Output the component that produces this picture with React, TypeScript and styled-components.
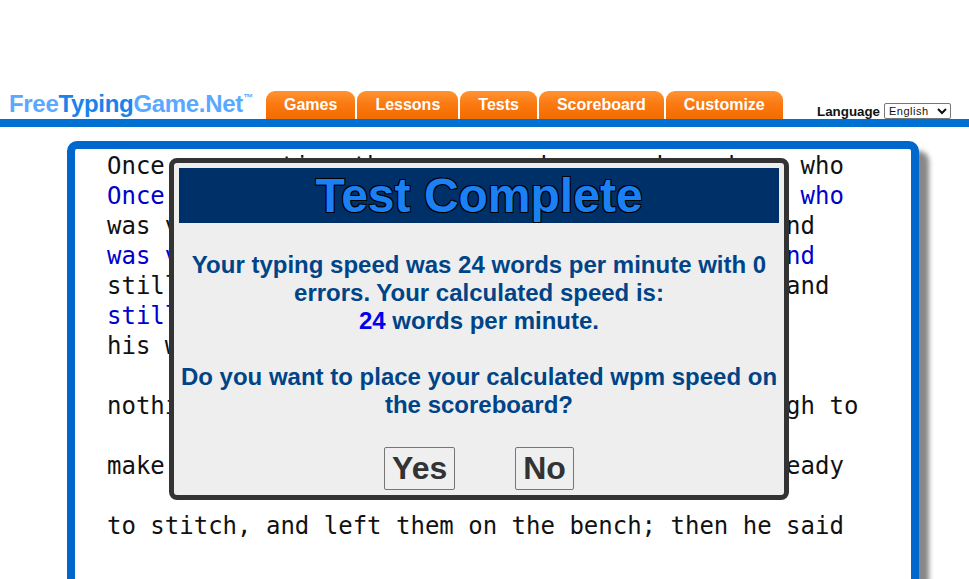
import React from "react";
import styled, { createGlobalStyle } from "styled-components";

const Global = createGlobalStyle`
  html, body { margin: 0; padding: 0; background: #fff; height: 100%; overflow: hidden; }
  body { font-family: "Liberation Sans", Arial, sans-serif; }
`;

const Page = styled.div`
  position: relative;
  width: 969px;
  height: 579px;
  overflow: hidden;
  padding-top: 91px;
  box-sizing: border-box;
`;

const Header = styled.header`
  display: flex;
  align-items: flex-end;
  height: 28px;
  padding-left: 9px;
  padding-right: 18px;
`;

const Logo = styled.div`
  width: 257px;
  align-self: flex-start;
  margin-top: -2px;
  font-size: 24px;
  line-height: 29px;
  font-weight: 700;
  letter-spacing: -0.32px;
  color: #5aa8ff;
  white-space: nowrap;
`;

const LogoAccent = styled.span`
  color: #1b82ea;
`;

const Tm = styled.sup`
  font-size: 10px;
  line-height: 0;
  vertical-align: 11px;
  letter-spacing: -0.5px;
`;

const Tabs = styled.nav`
  display: flex;
  gap: 2px;
  height: 28px;
`;

const Tab = styled.a`
  display: block;
  box-sizing: border-box;
  height: 28px;
  padding: 4px 18px 0;
  border-radius: 9px 9px 0 0;
  background: linear-gradient(#ff9433, #fb7a12 45%, #f26c00);
  color: #fff;
  font-size: 16px;
  line-height: 19px;
  font-weight: 700;
`;

const Language = styled.div`
  margin-left: auto;
  display: flex;
  align-items: flex-end;
  gap: 4px;
  font-size: 13.33px;
  font-weight: 700;
  color: #111;
`;

const LanguageLabel = styled.span`
  line-height: 15px;
`;

const LanguageSelect = styled.select`
  width: 67px;
  height: 16px;
  padding: 0;
  font-family: "Liberation Sans", Arial, sans-serif;
  font-size: 11px;
  letter-spacing: 0.5px;
  background: #fff;
  color: #111;
  border: 1px solid #767676;
  border-radius: 2px;
`;

const Bar = styled.div`
  height: 8px;
  background: #0070d2;
`;

const Panel = styled.main`
  box-sizing: border-box;
  width: 852px;
  height: 600px;
  margin: 14px 0 0 67px;
  border: 8px solid #0067cc;
  border-radius: 10px;
  padding: 2px 32px;
  background: #fff;
  box-shadow: 10px 10px 5px #888;
`;

const Line = styled.div<{ $typed?: boolean }>`
  height: 30px;
  font-family: "DejaVu Sans Mono", monospace;
  font-size: 24px;
  line-height: 30px;
  white-space: pre;
  color: ${(p) => (p.$typed ? "#0000cc" : "#111")};
`;

const Modal = styled.div`
  position: absolute;
  left: 169px;
  top: 158px;
  box-sizing: border-box;
  width: 620px;
  height: 342px;
  border: 5px solid #333;
  border-radius: 8px;
  background: #eee;
  padding: 5px 5px 0;
  text-align: center;
`;

const Title = styled.h1`
  margin: 0;
  height: 55px;
  background: #003068;
  color: #1a80f4;
  font-size: 48px;
  line-height: 55px;
  font-weight: 700;
  text-shadow: -1px -1px 0 #000, 1px -1px 0 #000, -1px 1px 0 #000, 1px 1px 0 #000;
`;

const Message = styled.p`
  margin: 28px 0 0;
  color: #004488;
  font-size: 24px;
  line-height: 28px;
  font-weight: 700;
`;

const Speed = styled.span`
  color: #0000ee;
`;

const Actions = styled.div`
  display: flex;
  justify-content: center;
  gap: 60px;
  margin-top: 28px;
`;

const Choice = styled.button`
  box-sizing: border-box;
  height: 43px;
  padding: 0 7px;
  border: 1px solid #767676;
  border-radius: 2px;
  background: #efefef;
  color: #333;
  font-family: "Liberation Sans", Arial, sans-serif;
  font-size: 32px;
  line-height: 41px;
  font-weight: 700;
`;

const lines: { text: string; typed?: boolean }[] = [
  { text: "Once upon a time there was a cheery maker, busy who" },
  { text: "Once upon a time there was a cheery maker, busy who", typed: true },
  { text: "was very honest and worked hard and had to attend" },
  { text: "was very honest and worked hard and had to attend", typed: true },
  { text: "still he could not earn nearly enough to live, and" },
  { text: "still he could not earn", typed: true },
  { text: "his work was gone, and at last he had" },
  { text: " ", typed: true },
  { text: "nothing left in the world but leather just enough to" },
  { text: " ", typed: true },
  { text: "make one pair of shoes. Then cut them out all ready" },
  { text: " ", typed: true },
  { text: "to stitch, and left them on the bench; then he said" },
];

const tabs = ["Games", "Lessons", "Tests", "Scoreboard", "Customize"];

export default function App() {
  return (
    <Page>
      <Global />
      <Header>
        <Logo>
          Free<LogoAccent>Typing</LogoAccent>Game.Net<Tm>™</Tm>
        </Logo>
        <Tabs>
          {tabs.map((t) => (
            <Tab key={t}>{t}</Tab>
          ))}
        </Tabs>
        <Language>
          <LanguageLabel>Language</LanguageLabel>
          <LanguageSelect defaultValue="English">
            <option>English</option>
          </LanguageSelect>
        </Language>
      </Header>
      <Bar />
      <Panel>
        {lines.map((l, i) => (
          <Line key={i} $typed={l.typed}>
            {l.text}
          </Line>
        ))}
      </Panel>
      <Modal>
        <Title>Test Complete</Title>
        <Message>
          Your typing speed was 24 words per minute with 0 errors. Your calculated speed is:
          <br />
          <Speed>24</Speed> words per minute.
          <br />
          <br />
          Do you want to place your calculated wpm speed on the scoreboard?
        </Message>
        <Actions>
          <Choice>Yes</Choice>
          <Choice>No</Choice>
        </Actions>
      </Modal>
    </Page>
  );
}
